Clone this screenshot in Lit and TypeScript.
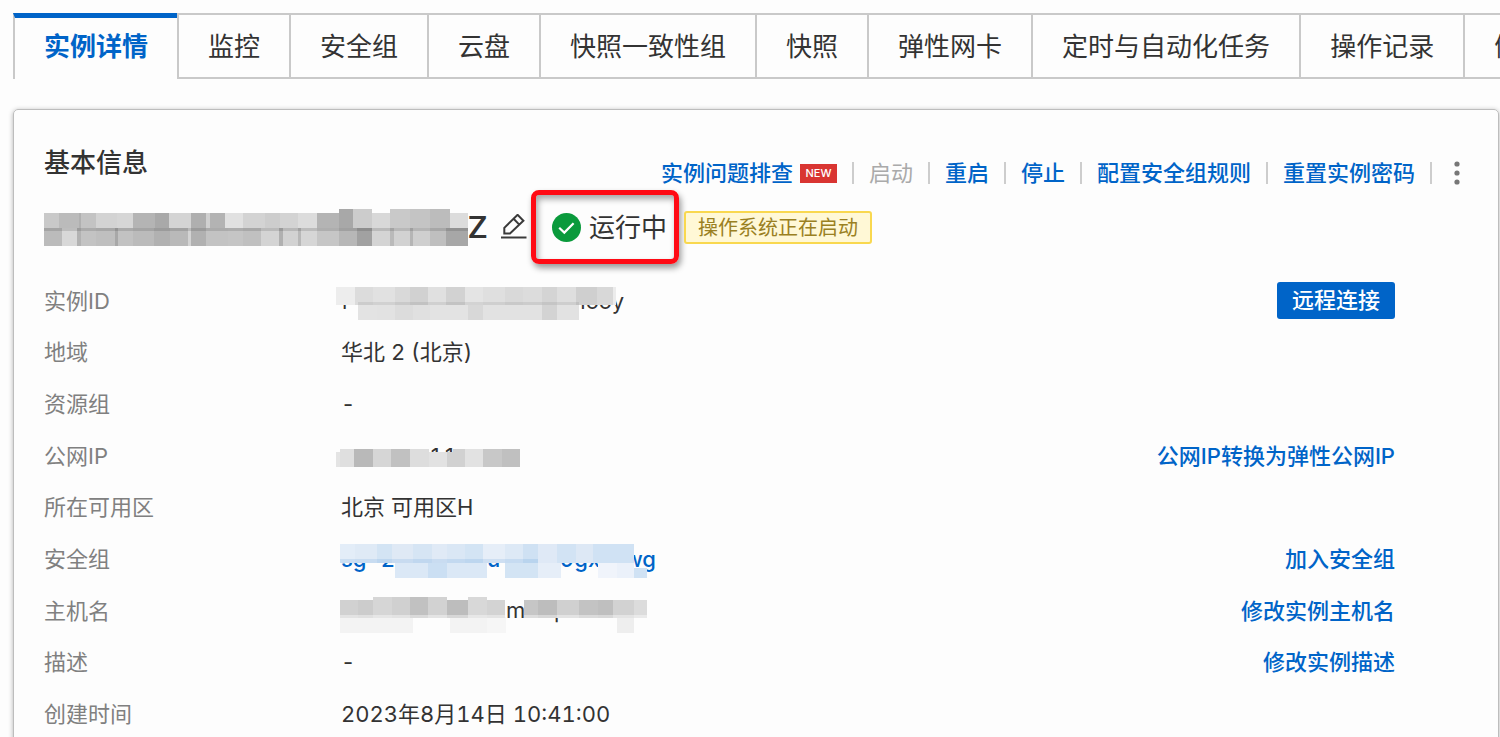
import { LitElement, html, svg, css, nothing } from "lit";
import { customElement, property, state } from "lit/decorators.js";

/** A horizontal run of mosaic tiles: each tile is [left, right, colour, top?]. */
type Tile = [number, number, string, number?];
interface Strip { top: number; bottom: number; tiles: Tile[]; }
interface Mark { x: number; y: number; text: string; end?: boolean; }
interface Mask { width: number; height: number; label: string; marks: Mark[]; strips: Strip[]; }

const NAME_MASK: Mask = {
  width: 424, height: 38, label: "实例名称已打码", marks: [],
  strips: [
    { top: 5, bottom: 21, tiles: [
      [0, 15, "#c9c9c9"], [15, 35, "#bbb"], [35, 37, "#b0b0b0"], [37, 52, "#c3c3c3"], [52, 73, "#d3d3d3"],
      [73, 89, "#d6d6d6"], [89, 111, "#b4b4b4"], [111, 125, "#a9a9a9"], [125, 147, "#d4d4d4"], [147, 162, "#afafaf"],
      [162, 166, "#d0d0d0"], [166, 181, "#b3b3b3"], [181, 199, "#e1e1e1"], [199, 221, "#d3d3d3"], [221, 236, "#cdcdcd"],
      [236, 254, "#d3d3d3"], [254, 273, "#dcdcdc"], [273, 295, "#b4b4b4"], [295, 309, "#a8a8a8", 1], [309, 328, "#cccccc", 1],
      [328, 346, "#d8d8d8"], [346, 366, "#c9c9c9", 1], [366, 386, "#c4c4c4", 1], [386, 406, "#bcbcbc", 1], [406, 424, "#dcdcdc"] ] },
    { top: 20, bottom: 38, tiles: [
      [0, 18, "#bbb"], [18, 33, "#d8d8d8"], [33, 37, "#b2b2b2"], [37, 52, "#c3c3c3"], [52, 71, "#bfbfbf"], [71, 74, "#a8a8a8"],
      [74, 89, "#c2c2c2"], [89, 110, "#bbbbbb"], [110, 126, "#b1b1b1"], [126, 144, "#b9b9b9"], [144, 147, "#d4d4d4"],
      [147, 162, "#b1b1b1"], [162, 184, "#c3c3c3"], [184, 199, "#c5c5c5"], [199, 217, "#c0c0c0"], [217, 235, "#d4d4d4"],
      [235, 239, "#b0b0b0"], [239, 254, "#d2d2d2"], [254, 257, "#b8b8b8"], [257, 273, "#d6d6d6"], [273, 295, "#c6c6c6"],
      [295, 313, "#b7b7b7"], [313, 328, "#a1a1a1"], [328, 346, "#d4d4d4"], [346, 350, "#bababa"], [350, 366, "#d2d2d2"],
      [366, 369, "#b5b5b5"], [369, 386, "#cfcfcf"], [386, 402, "#bfbfbf"], [402, 424, "#a7a7a7"] ] },
    { top: 20, bottom: 23, tiles: [[0, 424, "rgba(0,0,0,.12)"]] },
  ],
};

const ID_MASK: Mask = {
  width: 300, height: 44, label: "实例ID已打码",
  marks: [{ x: 6, y: 30, text: "i" }, { x: 288, y: 30, text: "iooy", end: true }],
  strips: [
    { top: 23, bottom: 41, tiles: [
      [22, 41, "#e3e3e3"], [41, 59, "#e2e2e2"], [59, 77, "#dcdcdc"], [77, 94, "#e0e0e0"], [94, 132, "#e3e3e3"],
      [132, 147, "#d8d8d8"], [147, 206, "#e2e2e2"], [206, 221, "#d3d3d3"], [221, 243, "#e2e2e2"] ] },
    { top: 8, bottom: 26, tiles: [
      [0, 19, "#ededed"], [19, 37, "#dcdcdc"], [37, 59, "#e1e1e1"], [59, 74, "#d9d9d9"], [74, 92, "#d1d1d1"],
      [92, 110, "#e0e0e0"], [110, 129, "#d2d2d2"], [129, 147, "#e4e4e4"], [147, 169, "#dfdfdf"], [169, 187, "#d9d9d9"],
      [187, 206, "#dcdcdc"], [206, 221, "#d4d4d4"], [221, 240, "#dedede"], [240, 261, "#cfcfcf"], [261, 277, "#d8d8d8"],
      [277, 280, "#ececec"] ] },
    { top: 23, bottom: 26, tiles: [[22, 243, "rgba(0,0,0,.07)"]] },
  ],
};

const IP_MASK: Mask = {
  width: 300, height: 44, label: "公网IP已打码",
  marks: [{ x: 93, y: 30, text: "11" }],
  strips: [
    { top: 15, bottom: 33, tiles: [
      [0, 4, "#e4e4e4", 18], [4, 18, "#dfdfdf"], [18, 37, "#b9b9b9"], [37, 55, "#d6d6d6"], [55, 74, "#c1c1c1"],
      [74, 93, "#dddddd"], [93, 111, "#e2e2e2", 18], [111, 117, "#d1d1d1", 18], [117, 129, "#d1d1d1"],
      [129, 147, "#e2e2e2"], [147, 166, "#c8c8c8"], [166, 184, "#c0c0c0"] ] },
  ],
};

const GROUP_MASK: Mask = {
  width: 322, height: 44, label: "安全组已打码",
  marks: [
    { x: 5, y: 30, text: "sg-2z" }, { x: 151, y: 30, text: "u" },
    { x: 224, y: 30, text: "9gx" }, { x: 320, y: 30, text: "wg", end: true },
  ],
  strips: [
    { top: 25, bottom: 41, tiles: [
      [59, 92, "#dbe8f6"], [92, 111, "#cbdff3"], [111, 151, "#dbe8f6"], [169, 202, "#d3e4f4"], [202, 225, "#e6eef8"],
      [262, 281, "#f0f4fb"], [281, 298, "#ebf1fa"], [298, 311, "#d0e2f4", 31] ] },
    { top: 7, bottom: 26, tiles: [
      [4, 19, "#e3edf8"], [19, 41, "#dfeaf6"], [41, 56, "#d3e4f4"], [56, 77, "#dfe9f5"], [77, 96, "#d6e5f4"],
      [96, 111, "#e0eaf6"], [111, 129, "#dae7f5"], [129, 147, "#d3e4f4"], [147, 169, "#e6eef8"], [169, 187, "#dde9f6"],
      [187, 202, "#cfe1f3"], [202, 221, "#dfe9f6"], [221, 240, "#d2e3f4"], [240, 257, "#dde8f5"], [257, 298, "#d0e2f4"] ] },
    { top: 22, bottom: 26, tiles: [[4, 202, "rgba(0,100,200,.1)"]] },
  ],
};

const HOST_MASK: Mask = {
  width: 312, height: 44, label: "主机名已打码",
  marks: [{ x: 170, y: 29, text: "m" }, { x: 218, y: 29, text: "p" }],
  strips: [
    { top: 28, bottom: 44, tiles: [
      [4, 77, "#f3f3f3"], [114, 151, "#f3f3f3"], [151, 170, "#f6f6f6"], [281, 298, "#eeeeee"] ] },
    { top: 11, bottom: 29, tiles: [
      [4, 22, "#d1d1d1"], [22, 37, "#cccccc"], [37, 56, "#d6d6d6", 8], [56, 74, "#d0d0d0", 8], [74, 92, "#c1c1c1", 8],
      [92, 111, "#d2d2d2", 8], [111, 132, "#bdbdbd"], [132, 151, "#d8d8d8", 8], [151, 169, "#d3d3d3"],
      [188, 202, "#c6c6c6"], [202, 221, "#bdbdbd"], [221, 243, "#d0d0d0"], [243, 262, "#c3c3c3"],
      [262, 277, "#bfbfbf"], [277, 298, "#d2d2d2"], [298, 311, "#dcdcdc"] ] },
    { top: 26, bottom: 29, tiles: [[4, 169, "rgba(255,255,255,.4)"], [188, 311, "rgba(255,255,255,.4)"]] },
  ],
};

@customElement("mosaic-mask")
class MosaicMask extends LitElement {
  @property({ attribute: false }) mask!: Mask;

  static styles = css`
    :host { display: block; flex: none; }
    .art { display: block; }
    .mark { fill: currentColor; font: inherit; }
  `;

  render() {
    const m = this.mask;
    return html`<svg class="art" width=${m.width} height=${m.height} viewBox="0 0 ${m.width} ${m.height}"
      role="img" aria-label=${m.label} shape-rendering="crispEdges">
      ${m.marks.map((k) => svg`<text class="mark" x=${k.x} y=${k.y} text-anchor=${k.end ? "end" : "start"}>${k.text}</text>`)}
      ${m.strips.map((s) => s.tiles.map(([a, b, fill, top]) => {
        const y = top ?? s.top;
        return svg`<rect x=${a} y=${y} width=${b - a} height=${s.bottom > y ? s.bottom - y : 0} fill=${fill}></rect>`;
      }))}
    </svg>`;
  }
}

interface Row {
  label: string;
  value?: string;
  mask?: Mask;
  linked?: boolean;
  action?: string;
  primary?: boolean;
}

const TABS = ["实例详情", "监控", "安全组", "云盘", "快照一致性组", "快照", "弹性网卡", "定时与自动化任务", "操作记录", "健康诊断"];

const ROWS: Row[] = [
  { label: "实例ID", mask: ID_MASK, action: "远程连接", primary: true },
  { label: "地域", value: "华北 2 (北京)" },
  { label: "资源组", value: "-" },
  { label: "公网IP", mask: IP_MASK, action: "公网IP转换为弹性公网IP" },
  { label: "所在可用区", value: "北京 可用区H" },
  { label: "安全组", mask: GROUP_MASK, linked: true, action: "加入安全组" },
  { label: "主机名", mask: HOST_MASK, action: "修改实例主机名" },
  { label: "描述", value: "-", action: "修改实例描述" },
  { label: "创建时间", value: "2023年8月14日 10:41:00" },
];

@customElement("app-root")
class AppRoot extends LitElement {
  @state() private active = 0;

  static styles = css`
    :host {
      --blue: #0064c8;
      --line: #c9c9c9;
      display: block;
      box-sizing: border-box;
      height: 100vh;
      padding: 13px 0 0 13px;
      overflow: hidden;
      background: #fdfdfd;
      color: #333;
      font: 22px/28px Inter, "Noto Sans CJK SC", sans-serif;
    }
    * { box-sizing: border-box; }
    button { font: inherit; color: inherit; background: none; border: 0; padding: 0; cursor: pointer; white-space: nowrap; }
    a { color: var(--blue); font-weight: 500; text-decoration: none; white-space: nowrap; }

    .tabs { display: flex; height: 66px; overflow: hidden; }
    .tab {
      flex: none;
      padding: 0 29px;
      border: 2px solid var(--line);
      border-right: 0;
      font-size: 26px;
      line-height: 64px;
    }
    .tab.active {
      border-bottom: 0;
      border-top: 5px solid var(--blue);
      color: var(--blue);
      font-weight: 700;
      line-height: 58px;
      padding-bottom: 3px;
    }

    .card {
      margin: 30px 1px 0 0;
      padding: 0 31px 40px 30px;
      border: 1px solid #bdbdbd;
      border-radius: 5px;
      box-shadow: 0 1px 5px rgba(0, 0, 0, .3);
    }
    .head { display: flex; justify-content: space-between; align-items: flex-start; height: 80px; }
    .title { margin: 33px 0 0; font-size: 26px; line-height: 40px; font-weight: 500; }
    .tools { display: flex; align-items: center; gap: 15px; margin-top: 49px; }
    .tool { display: flex; align-items: center; gap: 7px; }
    .sep { width: 2px; height: 22px; background: #cdcdcd; }
    .tools button:disabled { color: #aaa; cursor: default; }
    .new { width: 37px; background: #d93532; color: #fff; font-size: 11px; line-height: 19px; font-weight: 500; text-align: center; }
    .more { width: 20px; height: 26px; display: grid; place-items: center; }

    .identity { display: flex; align-items: center; height: 74px; }
    .initial { font: 500 32px/40px Roboto, sans-serif; margin: 0; }
    .name { display: flex; align-items: center; width: 457px; }
    .edit { width: 26px; height: 30px; margin-right: 4px; }
    .status {
      display: flex;
      align-items: center;
      gap: 8px;
      height: 74px;
      padding: 0 7px 0 16px;
      border: 5px solid #ff0a14;
      border-radius: 8px;
      box-shadow: 2px 4px 6px rgba(0, 0, 0, .4), inset 2px 4px 6px rgba(0, 0, 0, .35);
      font-size: 26px;
      white-space: nowrap;
    }
    .state { padding-top: 2px; }
    .tag {
      margin-left: 5px;
      padding: 1px 12px 0;
      border: 2px solid #f9d84f;
      border-radius: 3px;
      background: #fff8d6;
      color: #9a8022;
      font-size: 20px;
      line-height: 28px;
      white-space: nowrap;
    }

    .rows {
      display: grid;
      grid-auto-rows: minmax(51px, 1fr);
      min-height: 465px;
      margin: 11px 0 0;
      padding-right: 72px;
    }
    .row { display: grid; grid-template-columns: 297px 1fr auto; align-items: center; }
    .label { color: #808080; }
    .value { margin: 0; font-variant-numeric: tabular-nums; }
    .value.linked { color: var(--blue); font-weight: 500; }
    .masked { margin-left: -5px; }
    .act { margin: 0; }
    .primary {
      width: 118px;
      border-radius: 3px;
      background: var(--blue);
      color: #fff;
      font-weight: 500;
      line-height: 37px;
    }
    svg { display: block; }
  `;

  private sep() {
    return html`<span class="sep"></span>`;
  }

  private row(r: Row) {
    return html`<div class="row">
      <dt class="label">${r.label}</dt>
      <dd class="value ${r.linked ? "linked" : ""}">
        ${r.mask ? html`<mosaic-mask class="masked" .mask=${r.mask}></mosaic-mask>` : r.value}
      </dd>
      ${r.action
        ? html`<dd class="act">${r.primary
            ? html`<button class="primary">${r.action}</button>`
            : html`<a href="#">${r.action}</a>`}</dd>`
        : nothing}
    </div>`;
  }

  render() {
    return html`
      <nav class="tabs" role="tablist">
        ${TABS.map((t, i) => html`<button role="tab" class="tab ${i === this.active ? "active" : ""}"
          aria-selected=${i === this.active} @click=${() => (this.active = i)}>${t}</button>`)}
      </nav>
      <section class="card">
        <header class="head">
          <h2 class="title">基本信息</h2>
          <div class="tools">
            <span class="tool"><a href="#">实例问题排查</a><span class="new">NEW</span></span>
            ${this.sep()}<button disabled>启动</button>
            ${this.sep()}<a href="#">重启</a>
            ${this.sep()}<a href="#">停止</a>
            ${this.sep()}<a href="#">配置安全组规则</a>
            ${this.sep()}<a href="#">重置实例密码</a>
            ${this.sep()}<button class="more" aria-label="更多">
              <svg width="6" height="24" viewBox="0 0 6 24" fill="#777">
                <circle cx="3" cy="3" r="2.6"></circle><circle cx="3" cy="12" r="2.6"></circle><circle cx="3" cy="21" r="2.6"></circle>
              </svg>
            </button>
          </div>
        </header>
        <div class="identity">
          <div class="name"><mosaic-mask .mask=${NAME_MASK}></mosaic-mask><h3 class="initial">Z</h3></div>
          <button class="edit" aria-label="编辑名称">
            <svg width="26" height="27" viewBox="0 0 26 27" fill="none" stroke="#3a3a3a" stroke-width="2">
              <path d="M3.3 19.5V13.8L16.6 .8L22.4 6.7L9 19.5Z M12.6 4.8L18.3 10.6"></path>
              <path d="M0 23.5H25.5"></path>
            </svg>
          </button>
          <div class="status">
            <svg width="29" height="29" viewBox="0 0 29 29">
              <circle cx="14.5" cy="14.5" r="14.5" fill="#0a9a3c"></circle>
              <path d="M7.2 14.8L12.3 19.6L21.6 10.2" fill="none" stroke="#fff" stroke-width="2.2"></path>
            </svg>
            <span class="state">运行中</span>
          </div>
          <span class="tag">操作系统正在启动</span>
        </div>
        <dl class="rows">${ROWS.map((r) => this.row(r))}</dl>
      </section>
    `;
  }
}
